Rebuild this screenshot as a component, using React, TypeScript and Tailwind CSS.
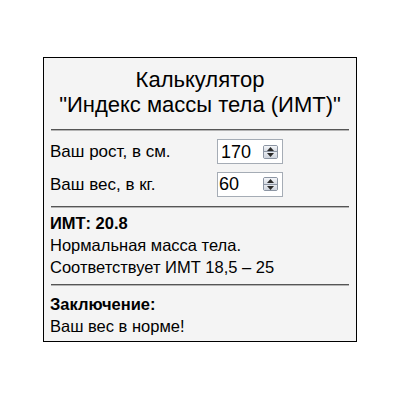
import { useState } from 'react';

function Spinner() {
  return (
    <div className="flex flex-col w-[15px] h-[14px] border border-[#8c95a3] rounded-[2px] overflow-hidden">
      <div className="flex-1 flex items-center justify-center bg-gradient-to-b from-[#f4f6f9] to-[#d6dbe3] border-b border-[#8c95a3]">
        <svg width="7" height="4" viewBox="0 0 7 4">
          <path d="M0 4 L3.5 0 L7 4 Z" fill="#2a2a2a" />
        </svg>
      </div>
      <div className="flex-1 flex items-center justify-center bg-gradient-to-b from-[#e9ecf1] to-[#cdd3dc]">
        <svg width="7" height="4" viewBox="0 0 7 4">
          <path d="M0 0 L3.5 4 L7 0 Z" fill="#2a2a2a" />
        </svg>
      </div>
    </div>
  );
}

function NumberField({ value, pad }: { value: string; pad: string }) {
  return (
    <div className="flex items-center justify-between w-[66px] h-[25px] bg-white border border-[#a5acb5] pr-[4px]">
      <span className={`${pad} text-[18px] leading-none text-black`}>{value}</span>
      <Spinner />
    </div>
  );
}

function Rule() {
  return <div className="h-[2px] ml-px mr-[1px] border-t border-[#555] bg-[#b4b4b4]" />;
}

export default function App() {
  const [height] = useState('170');
  const [weight] = useState('60');

  return (
    <div className="w-[400px] h-[400px] bg-white pt-[57px] pl-[43px]" style={{ fontFamily: '"Liberation Sans", Arial, sans-serif' }}>
      <div className="w-[314px] h-[285px] border border-black bg-[#f4f4f4] px-[6px] text-black">
        <div className="text-center text-[22px] leading-[25px] pt-[9px] pb-[12px]">
          <div>Калькулятор</div>
          <div>"Индекс массы тела (ИМТ)"</div>
        </div>
        <Rule />
        <div className="flex flex-col gap-[7px] pt-[8px] pb-[9px] text-[17px]">
          <div className="flex items-center">
            <span className="w-[167px]">Ваш рост, в см.</span>
            <NumberField value={height} pad="pl-[3px]" />
          </div>
          <div className="flex items-center">
            <span className="w-[167px]">Ваш вес, в кг.</span>
            <NumberField value={weight} pad="pl-[1px]" />
          </div>
        </div>
        <Rule />
        <div className="pt-[4px] pb-[6px] text-[16.5px] leading-[22px]">
          <div className="font-bold">ИМТ: 20.8</div>
          <div>Нормальная масса тела.</div>
          <div>Соответствует ИМТ 18,5 – 25</div>
        </div>
        <Rule />
        <div className="pt-[7px] text-[16.5px] leading-[22px]">
          <div className="font-bold">Заключение:</div>
          <div>Ваш вес в норме!</div>
        </div>
      </div>
    </div>
  );
}
